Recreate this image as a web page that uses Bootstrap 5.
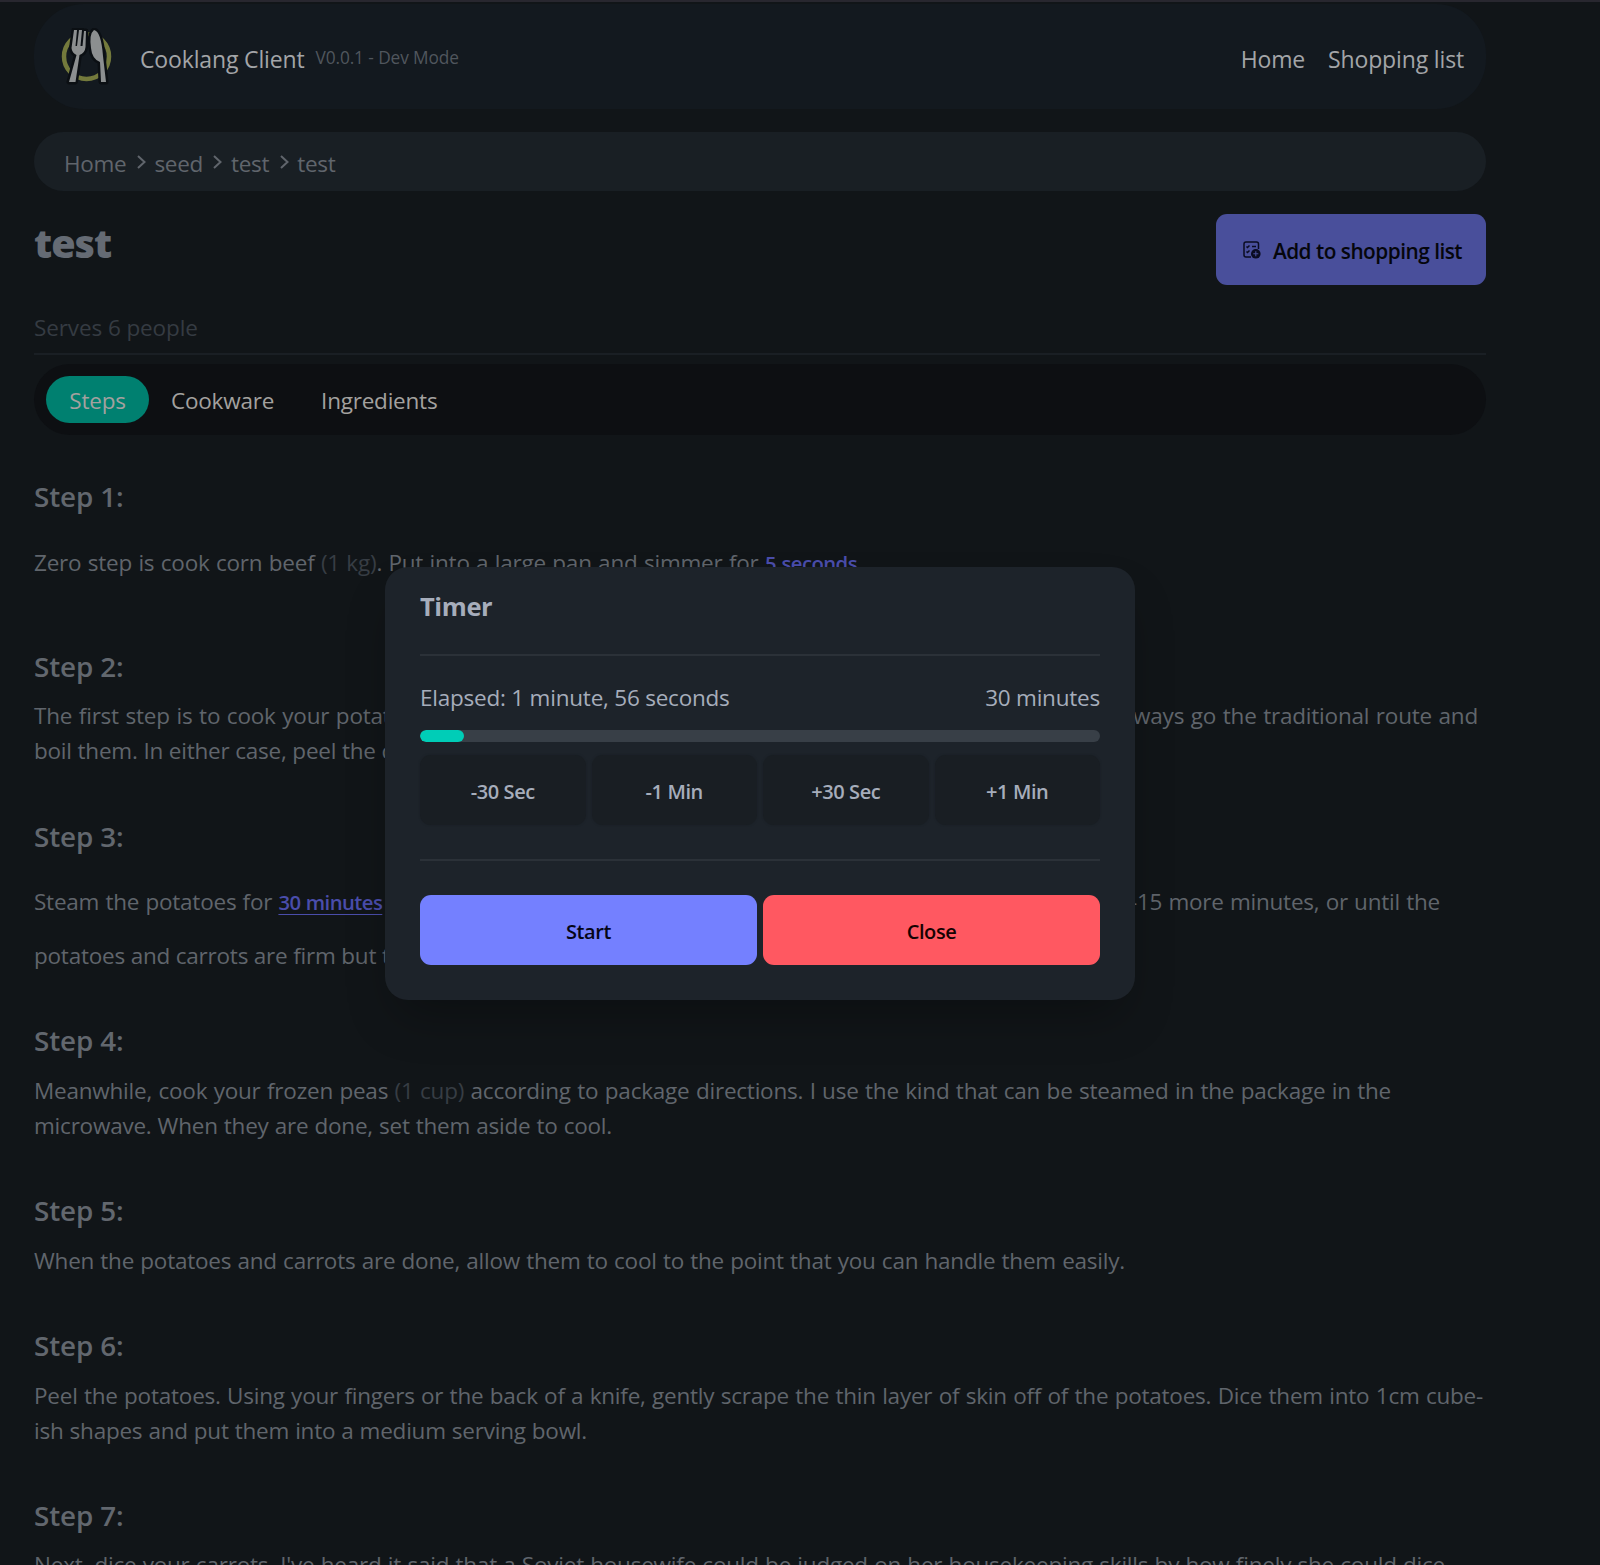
<!DOCTYPE html>
<html lang="en">
<head>
<meta charset="utf-8">
<meta name="viewport" content="width=device-width, initial-scale=1">
<title>Cooklang Client</title>
<link href="https://cdn.jsdelivr.net/npm/bootstrap@5.3.0/dist/css/bootstrap.min.css" rel="stylesheet">
<style>
body{background:#111518;color:#60656c;font:400 22.5px/35px "Open Sans","Noto Sans",sans-serif;letter-spacing:-.22px;height:1565px;overflow:hidden;border-top:2px solid #28272f}
.page{width:1452px;margin-left:34px;padding-top:2px}
.topbar{height:105px;border-radius:50px;background:#13191f;padding:5px 22px 0 26px;color:#a3a5a8;font-size:23px;font-weight:500}
.topbar svg{width:54px;height:60px;margin-bottom:3px}
.topbar .brand-name{margin-left:26px;letter-spacing:-.15px}
.topbar .version{margin-left:11px;font-size:17.3px;font-weight:400;color:#50565d;letter-spacing:-.1px;margin-top:-4px}
.topbar a{color:inherit;text-decoration:none;letter-spacing:-.15px}
.topbar nav{gap:23px}
.crumbs{height:59px;border-radius:30px;background:#191f24;margin-top:23px;padding:3px 29px 0 30px;gap:8.500px}
.crumbs svg{width:11px;height:16px;margin-top:-3px}
.crumbs span{letter-spacing:-.3px}
.title-row{margin-top:23px;height:71px}
.title-row h1{font-size:39.5px;font-weight:800;line-height:58px;margin:0;color:#656b74;letter-spacing:-1px}
.add-btn{width:270px;height:71px;border-radius:11px;background:#494f9b;color:#05060c;font-size:20.8px;font-weight:600;letter-spacing:-.5px;white-space:nowrap;padding-left:3px}
.serves{margin:25px 0 8px;color:#353b42;line-height:35px;letter-spacing:-.1px}
.rule{height:2px;background:#1a1f24}
.tabs{height:71px;margin-top:9px;border-radius:36px;background:#0d0f12;padding:0 12px;color:#a3a19f;font-weight:500}
.tabs .tab-on{width:103px;height:47px;border-radius:24px;background:#008070}
.tabs .tab-item{padding-top:2px}
.tabs .cookware{margin-left:22px}
.tabs .ingredients{margin-left:47px}
.steps{margin-top:41px}
.steps h2{font-size:27.8px;font-weight:600;line-height:40px;margin:0 0 12.600px;height:40px;letter-spacing:-.1px;color:#62676e}
.step{margin-bottom:47.200px}
.ln{display:block;white-space:nowrap;text-align:justify;text-align-last:justify}
.ln.tall{line-height:67px;height:70px}
.qty{color:#373d44}
.timer-link{color:#4a4dab;font-size:20.3px;font-weight:600;letter-spacing:-.55px}
.timer-link.on{text-decoration:underline;text-underline-offset:4px;text-decoration-thickness:1px}
.timer-box{position:absolute;left:385px;top:567px;width:750px;height:433px;border-radius:23px;background:#1d232a;color:#a6adbb;padding:0 35px;box-shadow:0 25px 50px -12px rgba(0,0,0,.3)}
.timer-box h3{font-size:25.5px;font-weight:700;line-height:40px;margin:19px 0 28px;letter-spacing:-.4px}
.timer-box .rule{background:#2b3138}
.timer-box .times{margin:24px 0 15px}
.timer-box .progress{height:12px;border-radius:6px;background:#383f47;--bs-progress-bar-bg:#00cdb7}
.timer-box .progress-bar{border-radius:6px}
.timer-box .btn-line{gap:6px}
.timer-box .adjust-line{margin:13px 0 34px}
.timer-box .action-line{margin-top:34px}
.tbtn{flex:1 1 0;height:70px;border-radius:11px;font-size:20px;font-weight:600;letter-spacing:-.42px;display:flex;align-items:center;justify-content:center;padding-top:3px}
.tbtn.adj{background:#191e23;box-shadow:0 0 2px #191e23;color:#a6adbb}
.tbtn.start{background:#7480ff;color:#050617}
.tbtn.close-timer{background:#ff5861;color:#160202}
.w1{width:823px}.w2{width:1444px}.w3{width:1406px}.w4{width:1357px}.w5{width:578px}.w6{width:1091px}.w7{width:1449px}.w8{width:553px}.w9{width:1411px}.w10{width:780px}.w11{width:682px}
</style>
<script src="https://cdn.jsdelivr.net/npm/bootstrap@5.3.0/dist/js/bootstrap.bundle.min.js"></script>
</head>
<body>
<div class="page">
  <header class="topbar d-flex align-items-center">
    <svg viewBox="0 0 54 60">
      <circle cx="26.500" cy="28.500" r="22.500" fill="none" stroke="#747a3c" stroke-width="4.500"/>
      <g stroke="#0b0f13" stroke-width="5" stroke-linejoin="round" fill="#0b0f13">
        <path d="M14 2 11.500 20Q12 25 16.500 27L9 54h6.500L19.500 27Q25 25 25.500 19L26 3h-2L22.500 18h-2L22 2h-3L17 18h-1.500L17 2Z"/>
        <path d="M34 2Q29 6 31 20 32 31 40 34L41 54h5L43 28Q41 3 34 2Z"/>
      </g>
      <path fill="#8c8f90" d="M14 2 11.500 20Q12 25 16.500 27L9 54h6.500L19.500 27Q25 25 25.500 19L26 3h-2L22.500 18h-2L22 2h-3L17 18h-1.500L17 2Z"/>
      <path fill="#8c8f90" d="M34 2Q29 6 31 20 32 31 40 34L41 54h5L43 28Q41 3 34 2Z"/>
    </svg>
    <span class="brand-name">Cooklang Client</span><span class="version">V0.0.1 - Dev Mode</span>
    <nav class="d-flex ms-auto"><a href="#">Home</a><a href="#">Shopping list</a></nav>
  </header>

  <div class="crumbs d-flex align-items-center">
    <span>Home</span><svg viewBox="0 0 11 16" fill="none" stroke="#60656c" stroke-width="2"><path d="M3 2l6.500 6L3 14"/></svg>
    <span>seed</span><svg viewBox="0 0 11 16" fill="none" stroke="#60656c" stroke-width="2"><path d="M3 2l6.500 6L3 14"/></svg>
    <span>test</span><svg viewBox="0 0 11 16" fill="none" stroke="#60656c" stroke-width="2"><path d="M3 2l6.500 6L3 14"/></svg>
    <span>test</span>
  </div>

  <div class="title-row d-flex justify-content-between">
    <h1>test</h1>
    <div class="add-btn d-flex align-items-center justify-content-center">
      <svg width="18" height="18" viewBox="0 0 18 18" fill="none" stroke="#0a0c22" stroke-width="1.500"><path d="M8 16H3q-2 0-2-2V3q0-2 2-2h10.500q2 0 2 2v5M3.500 5.500l1 1 2-2M9 5.500h4M3.500 10.500l1 1 2-2"/><circle cx="12.800" cy="12.800" r="4.800" fill="#0a0c22" stroke="none"/><path d="M12.800 10.300v5M10.300 12.800h5" stroke="#494f9b" stroke-width="1.100"/></svg>
      <span class="ms-2 ps-1 pt-1">Add to shopping list</span>
    </div>
  </div>

  <div class="serves">Serves 6 people</div>
  <div class="rule"></div>
  <div class="tabs d-flex align-items-center">
    <div class="tab-on d-flex align-items-center justify-content-center"><span class="tab-item">Steps</span></div>
    <span class="tab-item cookware">Cookware</span><span class="tab-item ingredients">Ingredients</span>
  </div>

  <main class="steps">
    <section class="step"><h2>Step 1:</h2>
      <span class="ln tall w1">Zero step is cook corn beef <span class="qty">(1 kg)</span>. Put into a large pan and simmer for <span class="timer-link">5 seconds</span></span></section>
    <section class="step"><h2>Step 2:</h2>
      <span class="ln w2">The first step is to cook your potatoes and carrots. I steam them since it is easy to manage, but you can always go the traditional route and</span>
      <span class="ln w10">boil them. In either case, peel the carrots first and leave the potatoes whole.</span></section>
    <section class="step"><h2>Step 3:</h2>
      <span class="ln tall w3">Steam the potatoes for <span class="timer-link on">30 minutes</span> or so. Add your peeled carrots to the steamer and keep steaming for 10-15 more minutes, or until the</span>
      <span class="ln w11">potatoes and carrots are firm but tender when pierced with a fork.</span></section>
    <section class="step"><h2>Step 4:</h2>
      <span class="ln w4">Meanwhile, cook your frozen peas <span class="qty">(1 cup)</span> according to package directions. I use the kind that can be steamed in the package in the</span>
      <span class="ln w5">microwave. When they are done, set them aside to cool.</span></section>
    <section class="step"><h2>Step 5:</h2>
      <span class="ln w6">When the potatoes and carrots are done, allow them to cool to the point that you can handle them easily.</span></section>
    <section class="step"><h2>Step 6:</h2>
      <span class="ln w7">Peel the potatoes. Using your fingers or the back of a knife, gently scrape the thin layer of skin off of the potatoes. Dice them into 1cm cube-</span>
      <span class="ln w8">ish shapes and put them into a medium serving bowl.</span></section>
    <section class="step"><h2>Step 7:</h2>
      <span class="ln w9">Next, dice your carrots. I've heard it said that a Soviet housewife could be judged on her housekeeping skills by how finely she could dice</span></section>
  </main>
</div>

<div class="timer-box" role="dialog">
  <h3>Timer</h3>
  <div class="rule"></div>
  <div class="times d-flex justify-content-between"><span>Elapsed: 1 minute, 56 seconds</span><span>30 minutes</span></div>
  <div class="progress"><div class="progress-bar" style="width:6.440%"></div></div>
  <div class="btn-line adjust-line d-flex"><div class="tbtn adj">-30 Sec</div><div class="tbtn adj">-1 Min</div><div class="tbtn adj">+30 Sec</div><div class="tbtn adj">+1 Min</div></div>
  <div class="rule"></div>
  <div class="btn-line action-line d-flex"><div class="tbtn start">Start</div><div class="tbtn close-timer">Close</div></div>
</div>
</body>
</html>
